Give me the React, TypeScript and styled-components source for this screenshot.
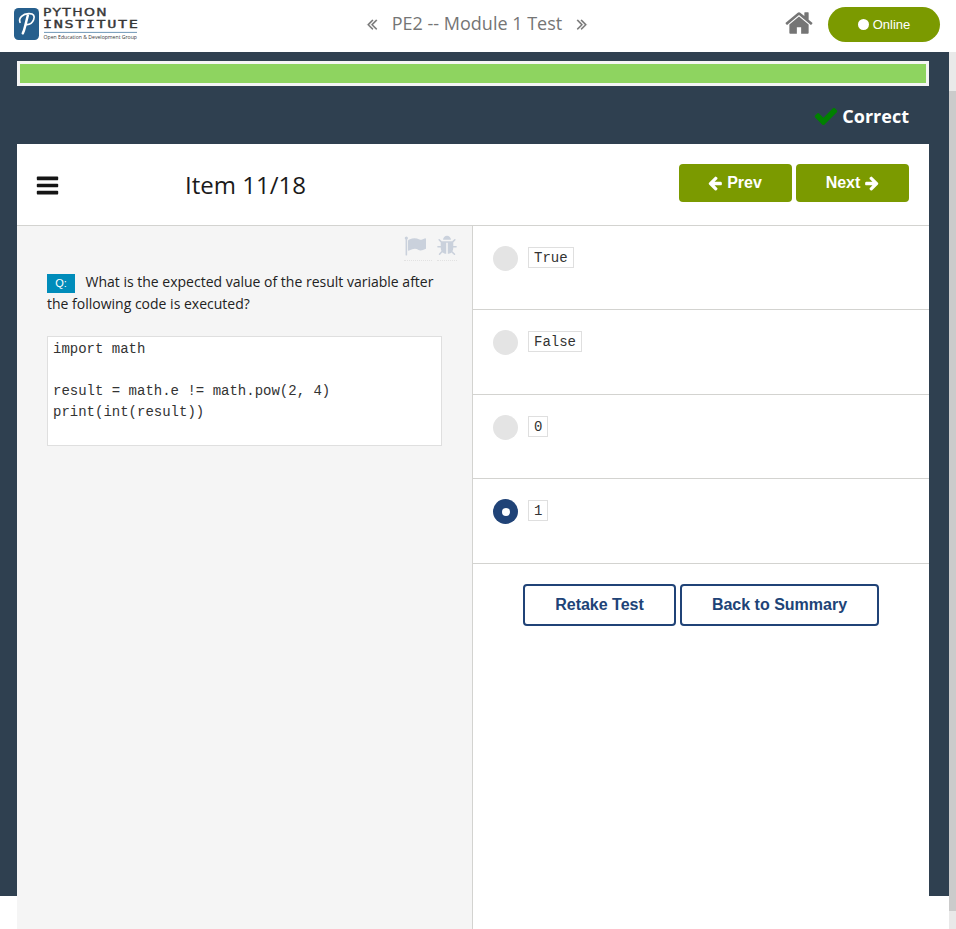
import React from "react";
import styled, { createGlobalStyle } from "styled-components";

const GlobalStyle = createGlobalStyle`
  *, *::before, *::after { box-sizing: border-box; }
  body { margin: 0; background: #fff; color: #222; font-family: "Open Sans", sans-serif; }
`;

const paths = {
  home: "M1472 992v480q0 26-19 45t-45 19h-384v-384h-256v384h-384q-26 0-45-19t-19-45v-480q0-1 .5-3t.5-3l575-474 575 474q1 2 1 6zm223-69l-62 74q-8 9-21 11h-3q-13 0-21-7l-692-577-692 577q-12 8-24 7-13-2-21-11l-62-74q-8-10-7-23.5t11-21.5l719-599q32-26 76-26t76 26l244 204v-195q0-14 9-23t23-9h192q14 0 23 9t9 23v408l219 182q10 8 11 21.5t-7 23.5z",
  check: "M1671 566q0 40-28 68l-724 724-136 136q-28 28-68 28t-68-28l-136-136-362-362q-28-28-28-68t28-68l136-136q28-28 68-28t68 28l294 295 656-657q28-28 68-28t68 28l136 136q28 28 28 68z",
  bars: "M1664 1344v128q0 26-19 45t-45 19h-1408q-26 0-45-19t-19-45v-128q0-26 19-45t45-19h1408q26 0 45 19t19 45zm0-512v128q0 26-19 45t-45 19h-1408q-26 0-45-19t-19-45v-128q0-26 19-45t45-19h1408q26 0 45 19t19 45zm0-512v128q0 26-19 45t-45 19h-1408q-26 0-45-19t-19-45v-128q0-26 19-45t45-19h1408q26 0 45 19t19 45z",
  arrow: "M1664 896v128q0 53-32.5 90.5t-84.5 37.5h-704l293 294q38 36 38 90t-38 90l-75 76q-37 37-90 37-52 0-91-37l-651-652q-37-37-37-90 0-52 37-91l651-650q38-38 91-38 52 0 90 38l75 74q38 38 38 91t-38 91l-293 293h704q52 0 84.5 37.5t32.5 90.5z",
  flag: "M320 256q0 72-64 110v1266q0 13-9.5 22.5t-22.5 9.5h-64q-13 0-22.5-9.5t-9.5-22.5v-1266q-64-38-64-110 0-53 37.5-90.5t90.5-37.5 90.5 37.5 37.5 90.5zm1472 64v763q0 25-12.5 38.5t-39.5 27.5q-215 116-369 116-61 0-123.5-22t-108.5-48-115.5-48-142.5-22q-192 0-464 146-17 9-33 9-26 0-45-19t-19-45v-742q0-32 31-55 21-14 79-43 236-120 421-120 107 0 200 29t219 88q38 19 88 19 54 0 117.5-21t110-47 88-47 54.5-21q26 0 45 19t19 45z",
  bug: "M1696 960q0 26-19 45t-45 19h-224q0 171-67 290l208 209q19 19 19 45t-19 45q-18 19-45 19t-45-19l-198-197q-5 5-15 13t-42 28.5-65 36.5-82 29-97 13v-896h-128v896q-51 0-101.5-13.5t-87-33-66-39-43.5-32.5l-15-14-183 207q-20 21-48 21-24 0-43-16-19-18-20.5-44.5t15.5-46.5l202-227q-58-114-58-274h-224q-26 0-45-19t-19-45 19-45 45-19h224v-294l-173-173q-19-19-19-45t19-45 45-19 45 19l173 173h844l173-173q19-19 45-19t45 19 19 45-19 45l-173 173v294h224q26 0 45 19t19 45zm-480-576h-640q0-133 93.5-226.5t226.5-93.5 226.5 93.5 93.5 226.5z",
  chevrons: "M1011 1376q0 13-10 23l-50 50q-10 10-23 10t-23-10l-466-466q-10-10-10-23t10-23l466-466q10-10 23-10t23 10l50 50q10 10 10 23t-10 23l-393 393 393 393q10 10 10 23zm384 0q0 13-10 23l-50 50q-10 10-23 10t-23-10l-466-466q-10-10-10-23t10-23l466-466q10-10 23-10t23 10l50 50q10 10 10 23t-10 23l-393 393 393 393q10 10 10 23z",
};

const Glyph = styled.svg<{ $size: number; $flip?: boolean }>`
  display: block;
  flex: none;
  width: ${(p) => p.$size}px;
  height: ${(p) => p.$size}px;
  fill: currentColor;
  overflow: visible;
  transform: ${(p) => (p.$flip ? "scaleX(-1)" : "none")};
`;

function Icon({ name, size, flip }: { name: keyof typeof paths; size: number; flip?: boolean }) {
  return (
    <Glyph $size={size} $flip={flip} viewBox="0 0 1792 1792" aria-hidden="true">
      <path d={paths[name]} />
    </Glyph>
  );
}

const Page = styled.div`
  height: 929px;
  overflow: hidden;
`;

const Header = styled.header`
  display: grid;
  grid-template-columns: 340px 274px 1fr;
  height: 52px;
  background: #fff;
  color: #757575;
`;

const LogoArt = styled.svg`
  display: block;
  width: 140px;
  height: 42px;
  margin: 6px 0 0 13px;
`;

const Title = styled.div`
  display: flex;
  align-items: center;
  justify-content: center;
  height: 46px;
  gap: 11px;
  font-size: 18px;
  white-space: nowrap;

  svg {
    margin-top: 1px;
    stroke: currentColor;
    stroke-width: 25px;
  }
`;

const HeaderActions = styled.div`
  display: flex;
  justify-content: flex-end;
  align-items: flex-start;
  padding: 7px 16px 0 0;
  gap: 14px;
`;

const HomeLink = styled.div`
  margin-top: 1px;
`;

const OnlinePill = styled.div`
  display: flex;
  align-items: center;
  justify-content: center;
  gap: 4px;
  width: 112px;
  height: 35px;
  border-radius: 18px;
  background: #7b9a00;
  color: #fff;
  font: 13px "Liberation Sans", Arial, sans-serif;
`;

const Dot = styled.span`
  width: 11px;
  height: 11px;
  border-radius: 50%;
  background: #fff;
`;

const Body = styled.div`
  display: grid;
  grid-template-columns: 949px 7px;
  height: 877px;
`;

const Stage = styled.main`
  height: 844px;
  padding: 9px 20px 0 17px;
  background: #2f4050;
`;

const ScrollTrack = styled.div`
  padding-top: 39px;
  background: #e9e9e9;
`;

const ScrollThumb = styled.div`
  height: 820px;
  background: #cbcbcb;
`;

const Progress = styled.div`
  height: 25px;
  border: 3px solid #f5f5f5;
  background: #8ed460;
`;

const Verdict = styled.div`
  display: flex;
  justify-content: flex-end;
  align-items: center;
  gap: 3px;
  height: 58px;
  padding: 1px 20px 0 0;
  color: #fff;
  font-size: 18px;
  font-weight: 700;
`;

const VerdictMark = styled.span`
  color: #008000;
`;

const Card = styled.section`
  display: grid;
  grid-template-rows: 82px 703px;
  background: #fff;
`;

const Toolbar = styled.div`
  display: grid;
  grid-template-columns: 150px 1fr auto;
  padding: 20px 20px 0 18px;
  border-bottom: 1px solid #d3d3d0;
`;

const MenuButton = styled.div`
  padding-top: 9px;
  color: #151515;
`;

const ItemTitle = styled.h1`
  margin: 4px 0 0;
  color: #1a1a1a;
  font-size: 24px;
  font-weight: 400;
  line-height: 34px;
`;

const ButtonGroup = styled.div`
  display: flex;
  align-items: flex-start;
  gap: 4px;
`;

const NavButton = styled.button<{ $shift: "left" | "right" }>`
  display: flex;
  align-items: center;
  justify-content: center;
  gap: 4px;
  width: 113px;
  height: 38px;
  padding: ${(p) => (p.$shift === "left" ? "0 2px 0 0" : "0 0 0 1px")};
  border: 0;
  border-radius: 4px;
  background: #7b9a00;
  color: #fff;
  font: bold 16px "Liberation Sans", Arial, sans-serif;
`;

const Columns = styled.div`
  display: grid;
  grid-template-columns: 456px 456px;
`;

const QuestionPane = styled.div`
  padding: 9px 30px 0;
  border-right: 1px solid #d3d3d0;
  background: #f5f5f5;
`;

const QuestionTools = styled.div`
  display: flex;
  justify-content: flex-end;
  gap: 5px;
  height: 36px;
  margin-right: -15px;
  color: #cad1dc;
`;

const ToolSlot = styled.span<{ $width: number }>`
  display: flex;
  justify-content: ${(p) => (p.$width > 22 ? "flex-start" : "center")};
  width: ${(p) => p.$width}px;
  height: 26px;
  border-bottom: 1px dotted #e2e2e2;
`;

const Question = styled.p`
  margin: 0;
  font-size: 14px;
  line-height: 22px;
`;

const Badge = styled.span`
  display: inline-block;
  width: 28px;
  height: 19px;
  margin-right: 10.5px;
  background: #008cba;
  color: #fff;
  font: 11px/19px "Liberation Sans", Arial, sans-serif;
  text-align: center;
`;

const Code = styled.pre`
  height: 110px;
  margin: 21px 0 0;
  padding: 2px 5px 0;
  border: 1px solid #dfdfdf;
  background: #fff;
  color: #333;
  font: 14px/21px "Liberation Mono", monospace;
`;

const Answers = styled.div`
  display: grid;
  grid-template-rows: 84px 85px 84px 85px auto;
`;

const Answer = styled.div`
  display: flex;
  align-items: flex-start;
  gap: 10px;
  padding: 20px 20px 0;
  border-bottom: 1px solid #d3d3d0;
`;

const Radio = styled.span<{ $checked: boolean }>`
  display: flex;
  align-items: center;
  justify-content: center;
  width: 25px;
  height: 25px;
  border-radius: 50%;
  background: ${(p) => (p.$checked ? "#204377" : "#e4e4e4")};

  &::after {
    content: "";
    width: 8px;
    height: 8px;
    margin-top: 1px;
    margin-left: 1px;
    border-radius: 50%;
    background: ${(p) => (p.$checked ? "#fff" : "transparent")};
  }
`;

const AnswerCode = styled.code`
  height: 21px;
  margin-top: 1px;
  padding: 1px 5px 0;
  border: 1px solid #dfdfdf;
  color: #333;
  font: 14px/19px "Liberation Mono", monospace;
`;

const Footer = styled.div`
  display: flex;
  justify-content: center;
  align-items: flex-start;
  gap: 4px;
  padding-top: 20px;
`;

const OutlineButton = styled.button<{ $width: number }>`
  width: ${(p) => p.$width}px;
  height: 42px;
  padding: 0;
  border: 2px solid #204377;
  border-radius: 4px;
  background: #fff;
  color: #204377;
  font: bold 16px "Liberation Sans", Arial, sans-serif;
`;

function Logo() {
  return (
    <LogoArt viewBox="0 0 140 42" role="img" aria-label="Python Institute">
      <rect x="1" y="2" width="25" height="32" rx="4.5" fill="#265f8d" />
      <g fill="none" stroke="#fff" strokeLinecap="round" strokeLinejoin="round">
        <path d="M14.8 9.5Q13.4 15 12.2 20T9.8 27.3" strokeWidth="2.5" />
        <path d="M7 16.3C5.3 11.5 10 8 15.5 7.7S22 10 20.6 13.8 15.5 18.8 13 18.6" strokeWidth="1.7" />
      </g>
      <g fill="#373737">
        <text x="30" y="9.6" fontSize="10" fontFamily="DejaVu Sans, sans-serif" letterSpacing="1" stroke="#373737" strokeWidth=".35" textLength="65" lengthAdjust="spacingAndGlyphs">PYTHON</text>
        <text x="30" y="22.4" fontSize="10.4" fontFamily="DejaVu Sans Mono, monospace" letterSpacing="1.1" stroke="#373737" strokeWidth=".35" textLength="96.5" lengthAdjust="spacingAndGlyphs">INSTITUTE</text>
        <text x="30.6" y="32.8" fontSize="5.4" fontFamily="Open Sans, sans-serif" textLength="93.4" lengthAdjust="spacingAndGlyphs">Open Education &amp; Development Group</text>
      </g>
      <path d="M31 26.4H124" stroke="#6f97b7" strokeWidth="1" />
    </LogoArt>
  );
}

const source = `import math

result = math.e != math.pow(2, 4)
print(int(result))
`;

const answers = ["True", "False", "0", "1"];

export default function App() {
  return (
    <Page>
      <GlobalStyle />
      <Header>
        <Logo />
        <Title>
          <Icon name="chevrons" size={18} />
          <span>PE2 -- Module 1 Test</span>
          <Icon name="chevrons" size={18} flip />
        </Title>
        <HeaderActions>
          <HomeLink><Icon name="home" size={30} /></HomeLink>
          <OnlinePill><Dot />Online</OnlinePill>
        </HeaderActions>
      </Header>
      <Body>
        <Stage>
          <Progress />
          <Verdict>
            <VerdictMark><Icon name="check" size={26} /></VerdictMark>
            Correct
          </Verdict>
          <Card>
            <Toolbar>
              <MenuButton><Icon name="bars" size={25} /></MenuButton>
              <ItemTitle>Item 11/18</ItemTitle>
              <ButtonGroup>
                <NavButton $shift="left"><Icon name="arrow" size={16} />Prev</NavButton>
                <NavButton $shift="right">Next<Icon name="arrow" size={16} flip /></NavButton>
              </ButtonGroup>
            </Toolbar>
            <Columns>
              <QuestionPane>
                <QuestionTools>
                  <ToolSlot $width={28}><Icon name="flag" size={22} /></ToolSlot>
                  <ToolSlot $width={20}><Icon name="bug" size={22} /></ToolSlot>
                </QuestionTools>
                <Question>
                  <Badge>Q:</Badge>What is the expected value of the result variable after the following code is executed?
                </Question>
                <Code>{source}</Code>
              </QuestionPane>
              <Answers>
                {answers.map((answer) => (
                  <Answer key={answer}>
                    <Radio $checked={answer === "1"} />
                    <AnswerCode>{answer}</AnswerCode>
                  </Answer>
                ))}
                <Footer>
                  <OutlineButton $width={153}>Retake Test</OutlineButton>
                  <OutlineButton $width={199}>Back to Summary</OutlineButton>
                </Footer>
              </Answers>
            </Columns>
          </Card>
        </Stage>
        <ScrollTrack><ScrollThumb /></ScrollTrack>
      </Body>
    </Page>
  );
}
